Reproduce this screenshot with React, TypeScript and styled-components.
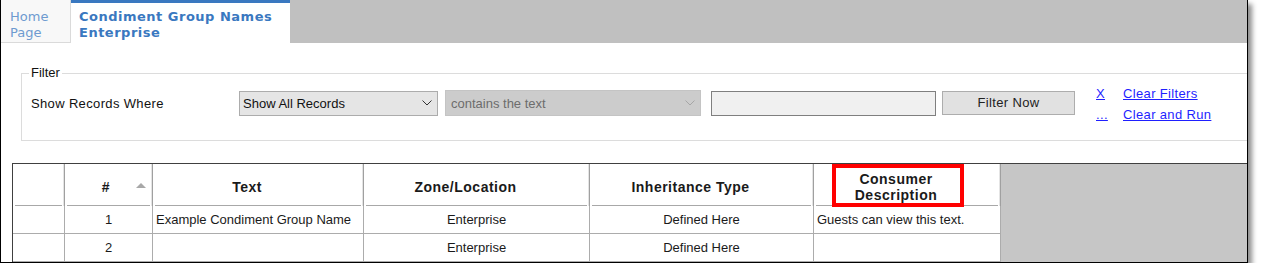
import React from 'react';
import styled, {createGlobalStyle} from 'styled-components';

const GlobalStyle = createGlobalStyle`
  body {
    margin: 0;
    background: #fff;
    font-family: 'Liberation Sans', Arial, sans-serif;
  }
`;

const Frame = styled.div`
  width: 1248px;
  height: 263px;
  box-sizing: border-box;
  border: 1px solid #000;
  border-top: none;
  box-shadow: 4px 4px 5px rgba(0, 0, 0, 0.45);
  background: #fff;
  overflow: hidden;
  display: flex;
  flex-direction: column;
`;

const TabStrip = styled.div`
  display: flex;
  height: 43px;
  flex-shrink: 0;
  background: #c0c0c0;
`;

const Tab = styled.div<{$active?: boolean}>`
  box-sizing: border-box;
  width: ${p => (p.$active ? 219 : 70)}px;
  height: 43px;
  padding: ${p => (p.$active ? '6px 0 0 8px' : '9px 0 0 9px')};
  border-top: ${p => (p.$active ? '3px solid #3a78c0' : 'none')};
  border-right: ${p => (p.$active ? 'none' : '1px solid #dadada')};
  border-bottom: ${p => (p.$active ? 'none' : '1px solid #dadada')};
  background: ${p => (p.$active ? '#fff' : '#f8f8f8')};
  font-family: 'DejaVu Sans', Verdana, sans-serif;
  font-size: 13px;
  line-height: 16px;
  letter-spacing: ${p => (p.$active ? 0.5 : 0)}px;
  font-weight: ${p => (p.$active ? 'bold' : 'normal')};
  color: ${p => (p.$active ? '#3a78c0' : '#6e9bd0')};
  white-space: nowrap;
`;

const FilterBox = styled.fieldset`
  box-sizing: border-box;
  width: 1260px;
  margin: 23px 0 0 20px;
  padding: 10px 0 24px 7px;
  border: 1px solid #dcdcdc;
  flex-shrink: 0;
`;

const Legend = styled.legend`
  padding: 0 2px;
  font-size: 13px;
  line-height: 14px;
  color: #111;
`;

const FilterRow = styled.div`
  display: flex;
  align-items: center;
  height: 26px;
  font-size: 13px;
  letter-spacing: 0.35px;
  color: #111;
`;

const FieldLabel = styled.div`
  box-sizing: border-box;
  width: 210px;
  padding-left: 2px;
`;

const Select = styled.div<{$width: number; $disabled?: boolean; $gap?: number}>`
  box-sizing: border-box;
  display: flex;
  align-items: center;
  justify-content: space-between;
  width: ${p => p.$width}px;
  height: ${p => (p.$disabled ? 26 : 25)}px;
  margin-left: ${p => p.$gap ?? 0}px;
  padding: 0 5px 0 ${p => (p.$disabled ? 5 : 3)}px;
  background: ${p => (p.$disabled ? '#cccccc' : '#e5e5e5')};
  border: 1px solid ${p => (p.$disabled ? '#c4c4c4' : '#acacac')};
  color: ${p => (p.$disabled ? '#6d6d6d' : '#111')};
  letter-spacing: 0;
`;

const TextBox = styled.div`
  box-sizing: border-box;
  width: 225px;
  height: 25px;
  margin-left: 10px;
  background: #f0f0f0;
  border: 1px solid #7f7f7f;
`;

const Button = styled.div`
  box-sizing: border-box;
  display: flex;
  align-items: center;
  justify-content: center;
  width: 133px;
  height: 24px;
  margin-left: 6px;
  padding-bottom: 1px;
  background: #e1e1e1;
  border: 1px solid #adadad;
  color: #222;
`;

const Links = styled.div`
  display: grid;
  grid-template-columns: 27px auto;
  grid-auto-rows: 21px;
  align-items: center;
  margin: 2px 0 0 21px;
`;

const LinkText = styled.a`
  color: #1f1fff;
  text-decoration: underline;
  cursor: pointer;
`;

const TableArea = styled.div`
  display: flex;
  margin: 22px 0 0 11px;
  border-top: 1px solid #404040;
  border-left: 1px solid #404040;
  background: #c6c6c6;
  flex-shrink: 0;
`;

const Grid = styled.div<{$columns: string}>`
  display: grid;
  grid-template-columns: ${p => p.$columns};
  grid-template-rows: 42px;
  grid-auto-rows: 28px;
`;

const HeaderCell = styled.div<{$padRight: number}>`
  position: relative;
  box-sizing: border-box;
  display: flex;
  align-items: center;
  justify-content: center;
  padding: 3px ${p => p.$padRight}px 0 0;
  background: #fff;
  border-right: 1px solid #a0a0a0;
  box-shadow: inset -1px 0 0 #e4e4e4;
  font-weight: bold;
  font-size: 14px;
  letter-spacing: 0.5px;
  line-height: 16px;
  text-align: center;
  color: #1a1a1a;

  &::after {
    content: '';
    position: absolute;
    left: 2px;
    right: 2px;
    bottom: 0;
    height: 1px;
    background: #a8a8a8;
  }
`;

const SortArrow = styled.span`
  position: absolute;
  right: 6px;
  top: 19px;
  width: 0;
  height: 0;
  border-left: 5px solid transparent;
  border-right: 5px solid transparent;
  border-bottom: 5px solid #a8a8a8;
`;

const Highlight = styled.div`
  position: absolute;
  left: 18px;
  top: 0;
  width: 132px;
  height: 43px;
  box-sizing: border-box;
  border: 4px solid #ff0000;
  z-index: 1;
`;

const Cell = styled.div<{$align: 'left' | 'center'}>`
  box-sizing: border-box;
  background: #fff;
  border-right: 1px solid #acacac;
  border-bottom: 1px solid #acacac;
  padding: 0 3px;
  font-size: 13px;
  line-height: 27px;
  color: #1a1a1a;
  text-align: ${p => p.$align};
  white-space: nowrap;
  overflow: hidden;
`;

const GrayArea = styled.div`
  flex: 1;
`;

const Chevron = ({color}: {color: string}) => (
  <svg width="10" height="6" viewBox="0 0 10 6">
    <path d="M0.5 0.5 L5 5 L9.5 0.5" fill="none" stroke={color} strokeWidth="1" />
  </svg>
);

type Column = {
  title: string[];
  width: number;
  align: 'left' | 'center';
  sort?: boolean;
  mark?: boolean;
};

const columns: Column[] = [
  {title: [], width: 52, align: 'center'},
  {title: ['#'], width: 88, align: 'center', sort: true},
  {title: ['Text'], width: 211, align: 'left'},
  {title: ['Zone/Location'], width: 226, align: 'center'},
  {title: ['Inheritance Type'], width: 224, align: 'center'},
  {title: ['Consumer', 'Description'], width: 187, align: 'left', mark: true},
];

const rows: string[][] = [
  ['', '1', 'Example Condiment Group Name', 'Enterprise', 'Defined Here', 'Guests can view this text.'],
  ['', '2', '', 'Enterprise', 'Defined Here', ''],
];

export default function App() {
  return (
    <>
      <GlobalStyle />
      <Frame>
        <TabStrip>
          <Tab>
            Home
            <br />
            Page
          </Tab>
          <Tab $active>
            Condiment Group Names
            <br />
            Enterprise
          </Tab>
        </TabStrip>

        <FilterBox>
          <Legend>Filter</Legend>
          <FilterRow>
            <FieldLabel>Show Records Where</FieldLabel>
            <Select $width={199}>
              Show All Records
              <Chevron color="#333" />
            </Select>
            <Select $width={256} $gap={7} $disabled>
              contains the text
              <Chevron color="#a6a6a6" />
            </Select>
            <TextBox />
            <Button>Filter Now</Button>
            <Links>
              <LinkText>X</LinkText>
              <LinkText>Clear Filters</LinkText>
              <LinkText>...</LinkText>
              <LinkText>Clear and Run</LinkText>
            </Links>
          </FilterRow>
        </FilterBox>

        <TableArea>
          <Grid $columns={columns.map(c => `${c.width}px`).join(' ')}>
            {columns.map((col, i) => (
              <HeaderCell key={`h${i}`} $padRight={col.sort ? 5 : 22}>
                <div>
                  {col.title.map((line, j) => (
                    <div key={j}>{line}</div>
                  ))}
                </div>
                {col.sort ? <SortArrow /> : null}
                {col.mark ? <Highlight /> : null}
              </HeaderCell>
            ))}
            {rows.map((row, r) =>
              row.map((value, c) => (
                <Cell key={`${r}-${c}`} $align={columns[c].align}>
                  {value}
                </Cell>
              )),
            )}
          </Grid>
          <GrayArea />
        </TableArea>
      </Frame>
    </>
  );
}
